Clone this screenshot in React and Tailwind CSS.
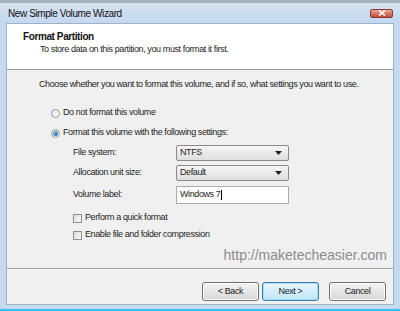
import React from 'react';

const font = { fontFamily: '"Liberation Sans", Arial, sans-serif' };

function Radio({ checked }) {
  return (
    <span className="relative flex h-[9px] w-[9px] shrink-0 items-center justify-center rounded-full border border-[#9a9a9a] bg-gradient-to-br from-[#e2e2e2] to-[#fbfbfb]">
      {checked && <span className="h-[5px] w-[5px] rounded-full bg-gradient-to-br from-[#7ec4ef] to-[#1c5f9e]" />}
    </span>
  );
}

function Check() {
  return <span className="h-[9px] w-[9px] shrink-0 border border-[#8f8f8f] bg-gradient-to-br from-[#dcdcdc] to-[#fafafa]" />;
}

function Select({ value }) {
  return (
    <div className="flex h-full w-[113px] items-center justify-between rounded-[2px] border border-[#8a8a8a] bg-gradient-to-b from-[#f6f6f6] to-[#dedede] pl-[3px] pr-[6px]">
      <span>{value}</span>
      <svg width="7" height="4" viewBox="0 0 7 4"><path d="M0 0h7L3.5 4z" fill="#222" /></svg>
    </div>
  );
}

function Btn({ children, focus }) {
  return (
    <button className={`flex h-[19px] w-[57px] items-center justify-center rounded-[3px] border bg-gradient-to-b text-[#222] ${focus ? 'border-[#3c7fb1] from-[#eaf6fd] to-[#bee6fd] shadow-[inset_0_0_0_1px_#a8dcf7]' : 'border-[#707070] from-[#f3f3f3] to-[#d8d8d8] shadow-[inset_0_0_0_1px_#fcfcfc]'}`}>
      {children}
    </button>
  );
}

export default function App() {
  return (
    <div className="flex h-[311px] w-[400px] flex-col overflow-hidden bg-[#c6d9ee] text-[9px] tracking-[-0.4px] text-[#1e1e1e]" style={font}>
      <div className="h-[3px] bg-[#a7b1bc]" />
      <div className="flex h-[20px] items-center justify-between bg-gradient-to-b from-[#d5e3f2] to-[#c4d8ee] pl-[8px] pr-[7px]">
        <span className="text-[10px] text-[#111]">New Simple Volume Wizard</span>
        <div className="flex h-[9px] w-[23px] items-center justify-center rounded-[2px] border border-[#8a3b3b] bg-gradient-to-b from-[#e8a493] to-[#c4483a]">
          <svg width="8" height="6" viewBox="0 0 8 6"><path d="M1 0.5l6 5M7 0.5l-6 5" stroke="#fff" strokeWidth="1.6" /></svg>
        </div>
      </div>
      <div className="flex flex-1 pl-[6px] pr-[6px]">
        <div className="flex flex-1 flex-col border border-[#9fb3c8] bg-[#f0f0f0]">
          <div className="h-[46px] border-b border-[#a0a0a0] bg-white pl-[16px]">
            <div className="mt-[6px] flex h-[13px] items-center text-[10px] font-bold text-[#111]">Format Partition</div>
            <div className="flex h-[13px] items-center pl-[17px]">To store data on this partition, you must format it first.</div>
          </div>
          <div className="flex h-[198px] flex-col pl-[32px]">
            <div className="mt-[8px] flex h-[14px] items-center">Choose whether you want to format this volume, and if so, what settings you want to use.</div>
            <div className="ml-[12px] mt-[14px] flex h-[14px] items-center gap-[3px]"><Radio /><span>Do not format this volume</span></div>
            <div className="ml-[12px] mt-[6px] flex h-[14px] items-center gap-[3px]"><Radio checked /><span>Format this volume with the following settings:</span></div>
            <div className="ml-[34px] mt-[5px] flex h-[16px] items-center">
              <span className="w-[103px]">File system:</span>
              <Select value="NTFS" />
            </div>
            <div className="ml-[34px] mt-[4px] flex h-[16px] items-center">
              <span className="w-[103px]">Allocation unit size:</span>
              <Select value="Default" />
            </div>
            <div className="ml-[34px] mt-[5px] flex h-[18px] items-center">
              <span className="w-[103px]">Volume label:</span>
              <div className="flex h-full w-[113px] items-center border border-[#abadb3] bg-white pl-[3px]">
                <span>Windows 7</span><span className="ml-[1px] h-[10px] w-[1px] bg-black" />
              </div>
            </div>
            <div className="ml-[34px] mt-[7px] flex h-[14px] items-center gap-[3px]"><Check /><span>Perform a quick format</span></div>
            <div className="ml-[34px] mt-[3px] flex h-[14px] items-center gap-[3px]"><Check /><span>Enable file and folder compression</span></div>
            <div className="mt-[4px] flex h-[18px] items-center justify-end pr-[6px] text-[14px] tracking-normal text-[#8c8c8c]">http://maketecheasier.com</div>
          </div>
          <div className="flex flex-1 items-start justify-end border-t border-[#a0a0a0] pr-[7px] pt-[13px] shadow-[inset_0_1px_0_#ffffff]">
            <Btn>&lt; Back</Btn>
            <div className="ml-[3px]"><Btn focus>Next &gt;</Btn></div>
            <div className="ml-[10px]"><Btn>Cancel</Btn></div>
          </div>
        </div>
      </div>
      <div className="h-[4px]" />
      <div className="h-[2px] bg-[#35c2ee]" />
    </div>
  );
}
